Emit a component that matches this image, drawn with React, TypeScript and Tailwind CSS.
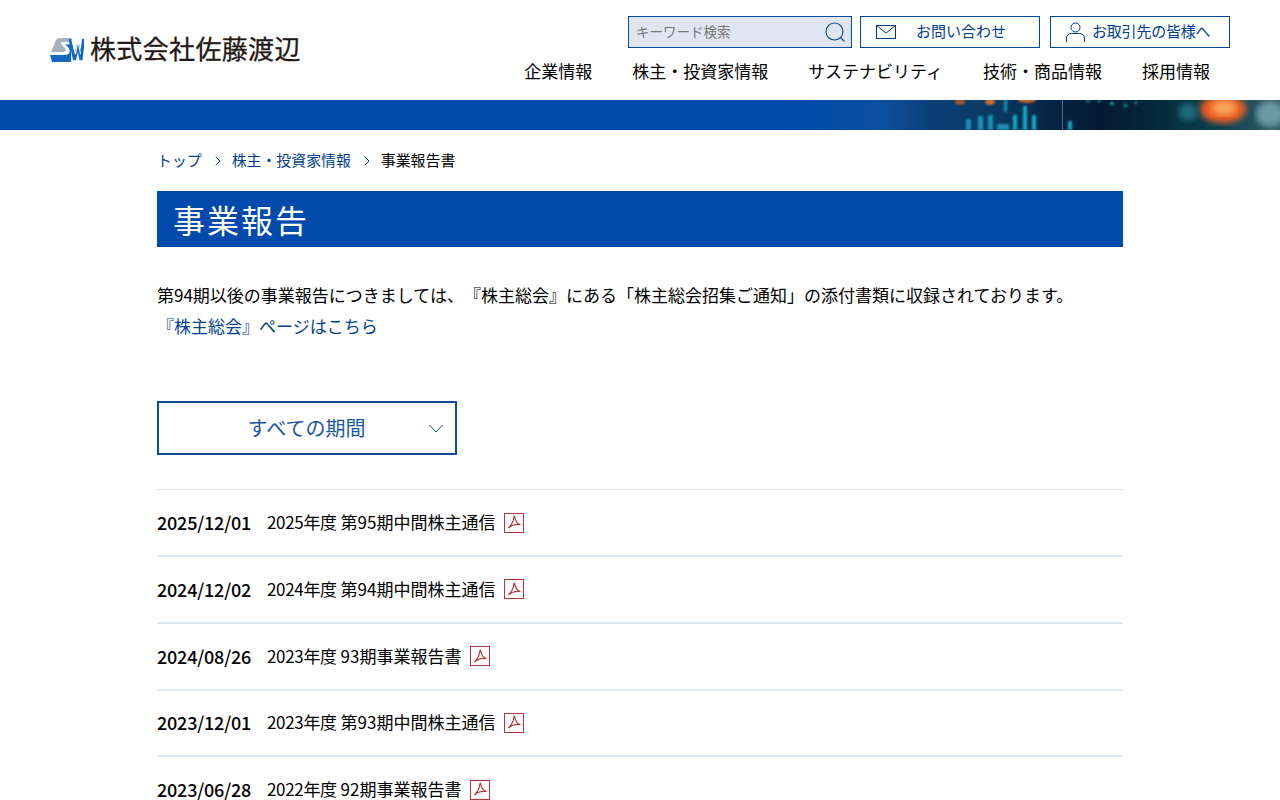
import { ChevronRight } from "lucide-react"

const FONT = "font-['Noto_Sans_CJK_JP','Noto_Sans',sans-serif]"

const NAV = ["企業情報", "株主・投資家情報", "サステナビリティ", "技術・商品情報", "採用情報"]

const REPORTS = [
  { date: "2025/12/01", year: "2025年度", title: "第95期中間株主通信" },
  { date: "2024/12/02", year: "2024年度", title: "第94期中間株主通信" },
  { date: "2024/08/26", year: "2023年度", title: "93期事業報告書" },
  { date: "2023/12/01", year: "2023年度", title: "第93期中間株主通信" },
  { date: "2023/06/28", year: "2022年度", title: "92期事業報告書" },
]

function Logo() {
  return (
    <svg width="34" height="24" viewBox="0 0 34 24" aria-hidden="true">
      <path d="M6 2Q7 0 10 0H21L20 4H12Q10 5 12 7L15 10Q17 12.5 14 14H1Z" fill="#a9b2bb" />
      <path d="M0 17H15C20 17 21 13 18 9L15 6.5H21V24H2Z" fill="#1468c4" />
      <path d="M20 1L24.5 22L28 7L31 22L33.5 1" fill="none" stroke="#1468c4" strokeWidth="3" />
      <path d="M22 2L25.5 16L28 3L30.5 16" fill="none" stroke="#fff" strokeWidth="1.1" />
    </svg>
  )
}

function PdfIcon() {
  return (
    <span className="ml-[9px] flex h-5 w-5 items-center justify-center border border-[#b8323c]">
      <svg width="15" height="15" viewBox="0 0 15 15" fill="none" stroke="#b8323c" strokeWidth="1.2" aria-hidden="true">
        <path d="M7 1.5C6.6 5.5 4.5 10 1.5 13C4 10.5 9 9 13.5 9.5C10.5 9 8 5.5 7.6 1.5C7.5 1 7.1 1 7 1.5Z" />
      </svg>
    </span>
  )
}

function Banner() {
  return (
    <div className="relative h-[30px] overflow-hidden bg-[linear-gradient(90deg,#004aad_0%,#004aad_61%,#0c4f9e_69%,#0b3f78_72.7%,#0a3a62_78%,#062545_82%,#031a33_86%,#04283a_90%,#0a3a48_94%,#2f5a68_100%)]">
      <svg className="absolute inset-0" width="1280" height="30" viewBox="0 0 1280 30" aria-hidden="true">
        <defs>
          <filter id="blur3"><feGaussianBlur stdDeviation="3" /></filter>
          <filter id="blur1"><feGaussianBlur stdDeviation="1.2" /></filter>
        </defs>
        <ellipse cx="1223" cy="9" rx="23" ry="14" fill="#ee5f22" filter="url(#blur3)" />
        <ellipse cx="1224" cy="8" rx="12" ry="7" fill="#f8a85a" filter="url(#blur3)" />
        <ellipse cx="1188" cy="12" rx="10" ry="9" fill="#1f6a78" filter="url(#blur3)" />
        <ellipse cx="1270" cy="14" rx="14" ry="13" fill="#6f99a6" filter="url(#blur3)" />
        <ellipse cx="1027" cy="0" rx="9" ry="3" fill="#c9662b" filter="url(#blur1)" />
        <ellipse cx="960" cy="2" rx="5" ry="3" fill="#a4572f" filter="url(#blur1)" />
        <ellipse cx="990" cy="2" rx="5" ry="3" fill="#d8702a" filter="url(#blur1)" />
        <g fill="#1a8fb0" filter="url(#blur1)">
          <rect x="966" y="19" width="5" height="11" />
          <rect x="978" y="16" width="5" height="14" />
          <rect x="988" y="15" width="5" height="15" />
          <rect x="1004" y="0" width="3" height="12" />
          <rect x="997" y="24" width="12" height="6" />
        </g>
        <g fill="#18a8c4" filter="url(#blur1)">
          <rect x="1013" y="15" width="4" height="15" />
          <rect x="1023" y="6" width="4" height="24" />
          <rect x="1032" y="15" width="4" height="15" />
          <rect x="1068" y="21" width="4" height="9" />
        </g>
        <rect x="1062" y="0" width="1" height="30" fill="#3f6f80" />
        <g fill="#1c9a9a" filter="url(#blur1)">
          <rect x="1086" y="0" width="4" height="2" />
          <rect x="1110" y="2" width="4" height="3" />
          <rect x="1124" y="4" width="3" height="3" />
          <rect x="1098" y="0" width="3" height="2" />
          <rect x="1135" y="1" width="2" height="3" />
        </g>
      </svg>
    </div>
  )
}

export default function App() {
  return (
    <div className={`${FONT} h-screen overflow-hidden bg-white text-black [text-spacing-trim:space-all]`}>
      <header className="flex h-[100px] justify-between pl-[50px] pr-[50px]">
        <div className="flex items-center gap-[6px] pb-[1px]">
          <Logo />
          <span className="mb-[3px] text-[26px] leading-none tracking-[0.35px] text-[#231815] [-webkit-text-stroke:0.3px_#231815]">株式会社佐藤渡辺</span>
        </div>
        <div className="flex flex-col items-end pt-4">
          <div className="flex text-[15px] text-[#00408f]">
            <div className="flex h-8 w-[224px] items-center justify-between border border-[#004a9c] bg-[#e0e6f1] pl-[7px] pr-[5px] text-[13.5px] text-[#767676]">
              <span className="mb-[2px]">キーワード検索</span>
              <svg width="22" height="22" viewBox="0 0 22 22" fill="none" stroke="#1c4f86" strokeWidth="1.1" aria-hidden="true">
                <circle cx="10.5" cy="10.5" r="8.5" />
                <path d="M16.5 16.5L20.5 20.5" />
              </svg>
            </div>
            <div className="ml-2 flex h-8 w-[180px] items-center border border-[#004a9c] pl-[15px]">
              <svg width="20" height="14" viewBox="0 0 20 14" fill="none" stroke="#003b73" strokeWidth="1" aria-hidden="true">
                <rect x="0.5" y="0.5" width="19" height="13" />
                <path d="M0.5 0.5L10 8L19.5 0.5" />
              </svg>
              <span className="mb-[2px] ml-5">お問い合わせ</span>
            </div>
            <div className="ml-[10px] flex h-8 w-[180px] items-center border border-[#004a9c] pl-[15px]">
              <svg width="19" height="21" viewBox="0 0 19 21" fill="none" stroke="#003b73" strokeWidth="1" aria-hidden="true">
                <circle cx="9.5" cy="5.5" r="4.5" />
                <path d="M0.5 20V16C0.5 13 3 11.5 5.5 11.5H13.5C16 11.5 18.5 13 18.5 16V20" />
              </svg>
              <span className="mb-[2px] ml-[7px] tracking-[-0.2px]">お取引先の皆様へ</span>
            </div>
          </div>
          <nav className="mt-[10px] flex gap-10 pr-5 text-[17px] leading-[26px]">
            {NAV.map((item) => (
              <span key={item}>{item}</span>
            ))}
          </nav>
        </div>
      </header>

      <Banner />

      <main className="mx-auto w-[966px]">
        <div className="flex h-[61px] items-center text-[14.9px] text-[#00408f]">
          <span>トップ</span>
          <ChevronRight size={16} strokeWidth={1.5} className="ml-2 mr-[6px] text-[#00408f]" />
          <span>株主・投資家情報</span>
          <ChevronRight size={16} strokeWidth={1.5} className="ml-2 mr-[6px] text-[#00408f]" />
          <span className="text-black">事業報告書</span>
        </div>

        <h1 className="flex h-14 items-center bg-[#004aad] pl-4 text-[32px] font-normal leading-none tracking-[2px] text-white">事業報告</h1>

        <div className="mt-8 text-[17px] leading-[31px]">
          <p>第94期以後の事業報告につきましては、『株主総会』にある「株主総会招集ご通知」の添付書類に収録されております。</p>
          <p className="text-[#00408f]">『株主総会』ページはこちら</p>
        </div>

        <div className="relative mt-[60px] flex h-[54px] w-[300px] items-center justify-center border-2 border-[#0f4c8f] pr-[1px] text-[20px] text-[#1a56a6]">
          すべての期間
          <svg className="absolute right-[12px] top-[21px]" width="14" height="9" viewBox="0 0 14 9" fill="none" stroke="#0f4c8f" strokeWidth="1" aria-hidden="true">
            <path d="M0.5 1L7 8L13.5 1" />
          </svg>
        </div>

        <ul className="mt-[34.2px] border-t border-[#e6e8ea]">
          {REPORTS.map((report) => (
            <li key={report.date} className="flex h-[66.8px] items-center border-b-2 border-[#dfe8ec] text-[17px] leading-[20px]">
              <span className="mb-[1px] w-[110px] text-[18px] font-medium tracking-[-0.2px]">{report.date}</span>
              <span className="mb-[1px]">
                <span className="tracking-[-0.33px]">{report.year}</span> {report.title}
              </span>
              <PdfIcon />
            </li>
          ))}
        </ul>
      </main>
    </div>
  )
}
